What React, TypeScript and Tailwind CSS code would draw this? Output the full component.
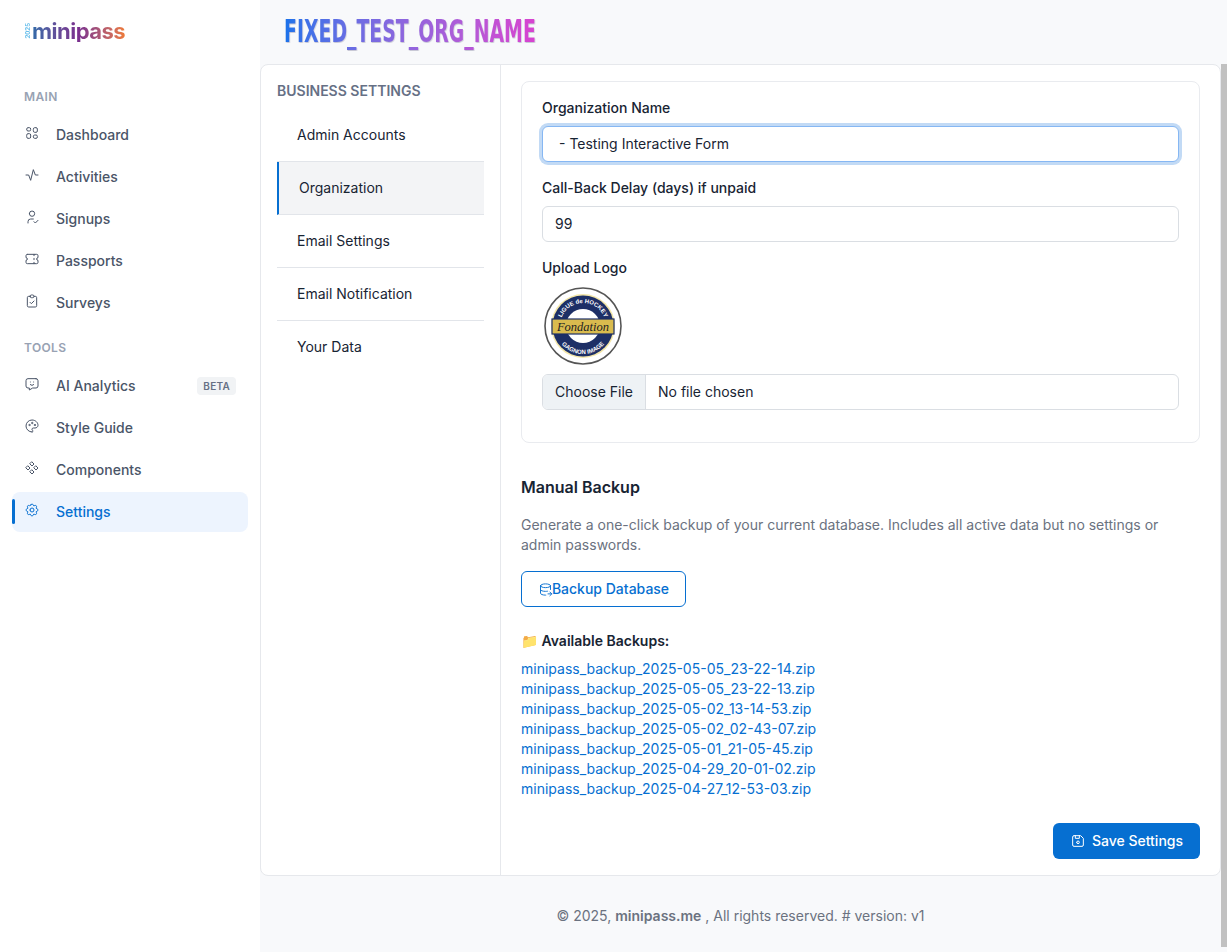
import {
  TbLayout2,
  TbActivity,
  TbUserCheck,
  TbTicket,
  TbClipboardCheck,
  TbMessageChatbot,
  TbPalette,
  TbComponents,
  TbSettings,
  TbDatabaseExport,
  TbDeviceFloppy,
} from 'react-icons/tb'
import type { IconType } from 'react-icons'

interface NavItem {
  label: string
  icon: IconType
  badge?: string
  active?: boolean
}

const mainNav: NavItem[] = [
  { label: 'Dashboard', icon: TbLayout2 },
  { label: 'Activities', icon: TbActivity },
  { label: 'Signups', icon: TbUserCheck },
  { label: 'Passports', icon: TbTicket },
  { label: 'Surveys', icon: TbClipboardCheck },
]

const toolsNav: NavItem[] = [
  { label: 'AI Analytics', icon: TbMessageChatbot, badge: 'BETA' },
  { label: 'Style Guide', icon: TbPalette },
  { label: 'Components', icon: TbComponents },
  { label: 'Settings', icon: TbSettings, active: true },
]

const settingsTabs = ['Admin Accounts', 'Organization', 'Email Settings', 'Email Notification', 'Your Data']

const backups = [
  'minipass_backup_2025-05-05_23-22-14.zip',
  'minipass_backup_2025-05-05_23-22-13.zip',
  'minipass_backup_2025-05-02_13-14-53.zip',
  'minipass_backup_2025-05-02_02-43-07.zip',
  'minipass_backup_2025-05-01_21-05-45.zip',
  'minipass_backup_2025-04-29_20-01-02.zip',
  'minipass_backup_2025-04-27_12-53-03.zip',
]

function NavLink({ item }: { item: NavItem }) {
  const Icon = item.icon
  return (
    <div
      className={`relative flex h-10 items-center rounded-lg pl-3 pr-3 text-sm font-medium ${
        item.active ? 'bg-[#edf4fe] text-[#066fd1]' : 'text-[#4a5568]'
      }`}
    >
      {item.active && <span className="absolute left-0 top-[7px] h-[25px] w-[3px] rounded-sm bg-[#066fd1]" />}
      <Icon size={16} strokeWidth={1.5} className="mb-1 mr-4 shrink-0" />
      <span className="flex-1">{item.label}</span>
      {item.badge && (
        <span className="rounded bg-[#f1f3f5] px-1.5 py-0.5 text-[10px] font-semibold leading-[14px] tracking-wide text-[#667085]">
          {item.badge}
        </span>
      )}
    </div>
  )
}

function ClubLogo() {
  return (
    <svg width="80" height="80" viewBox="0 0 80 80">
      <defs>
        <path id="arcTop" d="M17 40 A23 23 0 0 1 63 40" />
        <path id="arcBottom" d="M12 40 A28 28 0 0 0 68 40" />
      </defs>
      <circle cx="40" cy="40" r="38" fill="#fff" stroke="#555" strokeWidth="1.6" />
      <circle cx="40" cy="40" r="32" fill="#f3e6a8" />
      <circle cx="40" cy="40" r="30.5" fill="#1d2f66" />
      <circle cx="40" cy="40" r="17" fill="#fff" />
      <text fontSize="6" fontWeight="700" fill="#fff" fontFamily="Liberation Sans, sans-serif">
        <textPath href="#arcTop" startOffset="50%" textAnchor="middle">
          LIGUE de HOCKEY
        </textPath>
      </text>
      <text fontSize="6" fontWeight="700" fill="#fff" fontFamily="Liberation Sans, sans-serif">
        <textPath href="#arcBottom" startOffset="50%" textAnchor="middle">
          GAGNON IMAGE
        </textPath>
      </text>
      <rect x="9" y="33" width="62" height="15" fill="#d9bb4e" stroke="#1d2f66" strokeWidth="1.2" />
      <text
        x="40"
        y="44.5"
        textAnchor="middle"
        fontSize="12.5"
        fontStyle="italic"
        fill="#222"
        fontFamily="Liberation Serif, serif"
      >
        Fondation
      </text>
    </svg>
  )
}

export default function App() {
  return (
    <div className="relative flex h-[952px] w-[1227px] overflow-hidden bg-[#f8f9fb] font-['Inter',sans-serif] text-sm text-[#182433]">
      {/* Sidebar */}
      <aside className="flex w-[260px] shrink-0 flex-col bg-white px-3">
        <div className="flex h-[64px] items-center pl-3 pb-0.5">
          <span className="rotate-180 text-[6px] font-bold leading-[8px] text-[#6cc0ec] [writing-mode:vertical-rl]">
            2025
          </span>
          <span className="bg-gradient-to-r from-[#2f6aa8] via-[#7a2f8e] to-[#ee7a35] bg-clip-text text-[22px] font-bold leading-none tracking-[-0.5px] text-transparent">
            minipass
          </span>
        </div>

        <div className="mt-[25px] pl-3 text-xs font-semibold leading-4 tracking-[0.03em] text-[#98a2b3]">MAIN</div>
        <nav className="mt-[10px] flex flex-col gap-0.5">
          {mainNav.map((item) => (
            <NavLink key={item.label} item={item} />
          ))}
        </nav>

        <div className="mt-[17px] pl-3 text-xs font-semibold leading-4 tracking-[0.03em] text-[#98a2b3]">TOOLS</div>
        <nav className="mt-[10px] flex flex-col gap-0.5">
          {toolsNav.map((item) => (
            <NavLink key={item.label} item={item} />
          ))}
        </nav>
      </aside>

      {/* Main */}
      <main className="flex min-w-0 flex-1 flex-col">
        <header className="flex h-[64px] shrink-0 items-center pl-6">
          <h1 className="origin-left scale-x-[0.59] whitespace-nowrap bg-gradient-to-r from-[#1672ea] to-[#d842d0] bg-clip-text font-['DejaVu_Sans',sans-serif] text-[32px] font-bold leading-[1.3] text-transparent [filter:drop-shadow(1px_1px_0_#c9c9d6)]">
            FIXED_TEST_ORG_NAME
          </h1>
        </header>

        <div className="mr-[6px] flex h-[812px] shrink-0 rounded-lg border border-[#e6e8ec] bg-white">
          {/* Settings tabs */}
          <div className="w-[240px] shrink-0 border-r border-[#e6e8ec] pl-4 pr-4 pt-4">
            <div className="text-sm font-semibold leading-5 text-[#667085]">BUSINESS SETTINGS</div>
            <div className="mt-2">
              {settingsTabs.map((tab) => (
                <div
                  key={tab}
                  className={`flex h-[53px] items-center border-b text-sm ${
                    tab === 'Organization'
                      ? 'border-l-2 border-b-[#e2e5ea] border-l-[#066fd1] bg-[#f3f4f6] pl-5'
                      : tab === 'Your Data'
                        ? 'border-b-transparent pl-5'
                        : 'border-b-[#e2e5ea] pl-5'
                  }`}
                >
                  {tab}
                </div>
              ))}
            </div>
          </div>

          {/* Form */}
          <div className="flex min-w-0 flex-1 flex-col px-5 pt-4">
            <section className="h-[362px] rounded-lg border border-[#e9ebef] px-5 pt-4">
              <label className="block text-sm font-medium leading-5">Organization Name</label>
              <div className="mt-2 flex h-9 items-center rounded-md border border-[#86b7f3] bg-white px-3 text-sm shadow-[0_0_0_3px_#c2daf5]">
                <span className="pl-1">- Testing Interactive Form</span>
              </div>

              <label className="mt-4 block text-sm font-medium leading-5">Call-Back Delay (days) if unpaid</label>
              <div className="mt-2 flex h-9 items-center rounded-md border border-[#dadee3] bg-white px-3 text-sm">
                99
              </div>

              <label className="mt-4 block text-sm font-medium leading-5">Upload Logo</label>
              <div className="ml-px mt-2">
                <ClubLogo />
              </div>
              <div className="mt-[8px] flex h-9 items-center overflow-hidden rounded-md border border-[#dadee3]">
                <span className="flex h-full items-center border-r border-[#dadee3] bg-[#eef2f5] px-3 text-sm">
                  Choose File
                </span>
                <span className="px-3 text-sm">No file chosen</span>
              </div>
            </section>

            <h2 className="mt-[34px] text-base font-semibold leading-5">Manual Backup</h2>
            <p className="mt-[18px] text-sm leading-5 text-[#6b7280]">
              Generate a one-click backup of your current database. Includes all active data but no settings or admin
              passwords.
            </p>
            <button className="mt-4 flex h-9 w-[165px] items-center justify-center rounded-md border border-[#066fd1] bg-white text-sm font-medium text-[#066fd1]">
              <TbDatabaseExport size={15} strokeWidth={1.5} className="-mr-px" />
              Backup Database
            </button>

            <div className="mt-6 text-sm font-semibold leading-5">📁 Available Backups:</div>
            <ul className="mt-[8px]">
              {backups.map((name) => (
                <li key={name} className="text-sm leading-5 text-[#066fd1]">
                  {name}
                </li>
              ))}
            </ul>

            <div className="mt-[24px] flex justify-end">
              <button className="flex h-9 w-[147px] items-center justify-center gap-1.5 rounded-md bg-[#066fd1] text-sm font-medium text-white">
                <TbDeviceFloppy size={16} strokeWidth={1.5} />
                Save Settings
              </button>
            </div>
          </div>
        </div>

        <footer className="flex h-[76px] items-center justify-center pr-1.5 pt-1 text-sm text-[#6b7280]">
          <span>
            © 2025, <strong className="font-semibold">minipass.me</strong> , All rights reserved. # version: v1
          </span>
        </footer>
      </main>

      {/* page scrollbar thumb */}
      <div className="absolute right-0 top-16 h-[883px] w-[6px] bg-[#c1c1c1]" />
    </div>
  )
}
